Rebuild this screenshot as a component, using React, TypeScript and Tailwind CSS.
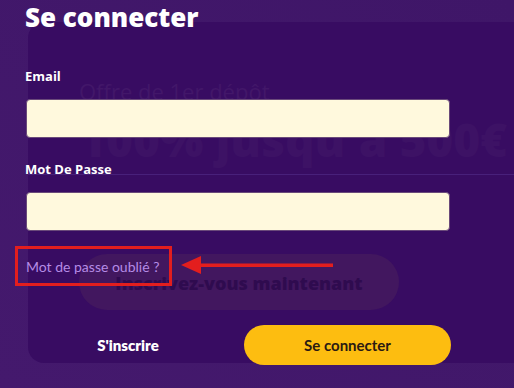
import { useState } from "react";

const lato = { fontFamily: '"Lato", "Open Sans", sans-serif' };
const open = { fontFamily: '"Open Sans", "Lato", sans-serif' };

const BackgroundPage = () => {
  return (
    <div className="pt-[22px] pl-[28px] pb-[25px]">
      <div className="h-[341px] rounded-l-2xl bg-[#380c62] pl-[51px] pt-[54px]" style={open}>
        <p className="text-[22px] leading-[30px] text-[#421769]">Offre de 1er dépôt</p>
        <p className="mt-[13px] text-[46px] leading-[40px] font-extrabold whitespace-nowrap text-[#3d1265]">
          100% jusqu'à 500€
        </p>
        <div className="-ml-[51px] mt-[15px] h-px bg-[#48207a]" />
        <div className="mt-[79px] flex h-[56px] w-[320px] items-center justify-center rounded-full bg-[#42175f]">
          <span className="pt-[3px] text-[18px] font-extrabold text-[#2f0b4f]">Inscrivez-vous maintenant</span>
        </div>
      </div>
    </div>
  );
};

const Field = ({ label }: { label: string }) => {
  const [value, setValue] = useState("");
  return (
    <div>
      <label className="block text-[13px] leading-[16px] font-bold text-white" style={open}>
        {label}
      </label>
      <input
        value={value}
        onChange={(e) => setValue(e.target.value)}
        className="mt-[15px] ml-[1px] block h-[39px] w-[424px] rounded-[4px] border border-[#6a4a7a] bg-[#fff9dd] px-3 outline-none"
      />
    </div>
  );
};

const App = () => {
  return (
    <div className="relative h-[388px] w-[514px] overflow-hidden bg-gradient-to-tr from-[#44196d] to-[#3f1668]" style={lato}>
      <BackgroundPage />

      <div className="absolute inset-0 pl-[25px]">
        <h1 className="pt-[2px] text-[26px] leading-[30px] font-extrabold text-white" style={open}>
          Se connecter
        </h1>

        <div className="mt-[36px] flex flex-col gap-[23px]">
          <Field label="Email" />
          <Field label="Mot De Passe" />
        </div>

        <div className="mt-[15px] flex items-center">
          <div className="-ml-[10px] flex h-[40px] w-[157px] items-center border-[3px] border-[#e31e1e] pl-[8px]">
            <a href="#" className="text-[14px] text-[#b58be6]">
              Mot de passe oublié ?
            </a>
          </div>
          <svg width="160" height="22" viewBox="0 0 160 22" className="ml-[9px] -mt-[3px]">
            <polygon points="0,11 20,2 20,20" fill="#e31e1e" />
            <rect x="18" y="9.5" width="134" height="3.5" fill="#e31e1e" />
          </svg>
        </div>

        <div className="mt-[39px] flex items-center">
          <button className="w-[206px] text-center text-[15px] font-extrabold text-white">S'inscrire</button>
          <button className="ml-[13px] h-[40px] w-[207px] rounded-full bg-[#fdbd10] text-[15px] font-bold text-[#2b1a12]">
            Se connecter
          </button>
        </div>
      </div>
    </div>
  );
};

export default App;
